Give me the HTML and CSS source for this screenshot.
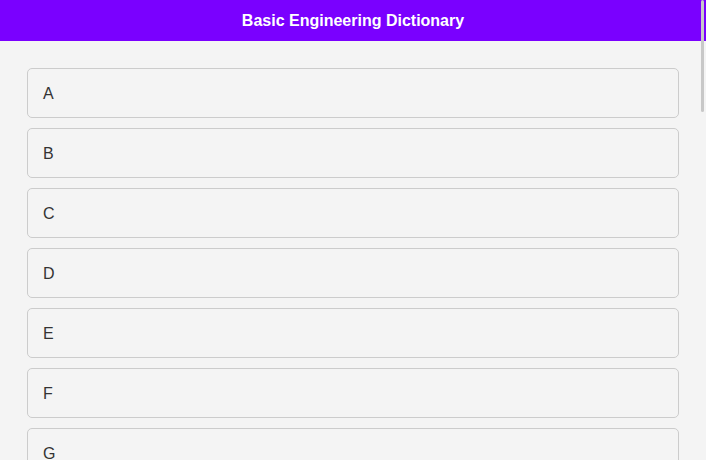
FILE: index.html
```html
<!DOCTYPE html>
<html lang="en">
<head>
<meta charset="utf-8">
<title>Basic Engineering Dictionary</title>
<link rel="stylesheet" href="styles.css">
</head>
<body>
<header class="topbar">
  <h1 class="title">Basic Engineering Dictionary</h1>
</header>
<main class="list">
  <div class="item">A</div>
  <div class="item">B</div>
  <div class="item">C</div>
  <div class="item">D</div>
  <div class="item">E</div>
  <div class="item">F</div>
  <div class="item">G</div>
</main>
<div class="scroll-thumb"></div>
</body>
</html>
```

FILE: styles.css
```css
html, body {
  margin: 0;
  padding: 0;
  height: 460px;
  overflow: hidden;
}
body {
  background: #f4f4f4;
  font-family: "Liberation Sans", Arial, sans-serif;
  color: #333;
}
.topbar {
  background: #7a00ff;
  height: 41px;
  display: flex;
  align-items: center;
  justify-content: center;
}
.title {
  margin: 0;
  font-size: 16px;
  font-weight: bold;
  color: #fff;
}
.list {
  display: flex;
  flex-direction: column;
  gap: 10px;
  padding: 27px;
}
.item {
  flex: none;
  box-sizing: border-box;
  height: 50px;
  border: 1px solid #cccccc;
  border-radius: 5px;
  padding: 2px 15px 0;
  display: flex;
  align-items: center;
  font-size: 16px;
  color: #333;
}
.scroll-thumb {
  position: fixed;
  top: 0;
  right: 2px;
  width: 3px;
  height: 112px;
  background: #c8c8c8;
  border-radius: 2px;
}
```
